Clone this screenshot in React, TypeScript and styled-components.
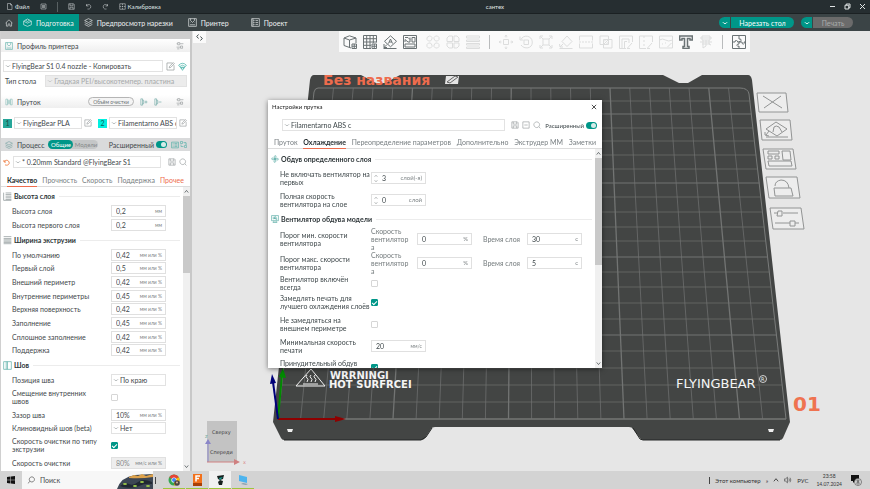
import React, { useId, useState } from 'react';
import styled, { createGlobalStyle, css } from 'styled-components';

const teal = '#009688';
const orange = '#ee6c4d';

const GlobalStyle = createGlobalStyle`
  * { box-sizing: border-box; }
  body { margin: 0; background: #e6e6e6; }
  body, button, input, select { font-family: Lato, "Noto Sans", sans-serif; font-size: 7px; color: #3f484b; }
  button, input, select { margin: 0; padding: 0; border: 0; background: none; border-radius: 0; }
  button { cursor: pointer; }
`;

/* ---------- icons ---------- */

const icons: Record<string, React.ReactNode> = {
  file: <path d="M3 1h6l3 3v9H3zM9 1v3h3" />,
  menu: <path d="M2 2h10v10H2zM4 5h6M4 7h6M4 9h6" />,
  save: <path d="M1.500 1.500h9.500l1.500 1.500v9.500H1.500zM4 1.500v4h6v-4M4 12.500V8.500h6v4" />,
  undo: <path d="M3 2v4h4M3 5.500C5 2 11 2 11.500 7S7 12.500 5 12" />,
  redo: <path d="M11 2v4H7M11 5.500C9 2 3 2 2.500 7S7 12.500 9 12" />,
  calib: <path d="M1.500 1.500h11v11h-11zM7 1.500v3M7 9.500v3M1.500 7h3M9.500 7h3M7 6v2M6 7h2" />,
  home: <path d="M1 7l6-5.500L13 7M2.500 6v6.500h3V9q1.500-2 3 0v3.500h3V6" />,
  box: <path d="M1 5l6-3.500L13 5v5.500L7 13l-6-2.500zM1 5l6 3 6-3M4 3.500L7 5.500l3-2" />,
  layers: <path d="M1 4l6-3 6 3-6 3zM1 7l6 3 6-3M1 10l6 3 6-3" />,
  printer: <path d="M1 1h12v12H1zM4 1v3l3 3 3-3V1M3 10.500h8M4 7h.5M9.500 7h.5" />,
  project: <path d="M1 1h12v12H1zM3.500 4h2M7 4h4M3.500 7h2M7 7h4M3.500 10h2M7 10h4M3 1v12" />,
  tune: <path d="M1 3h2M7 3h6M3 1h3.500v4H3zM1 9h7M8 7h3.500v4H8zM2 12h4" />,
  edit: <path d="M10 1.500H1.500v11h11V5M5 9l.7-2.500L11.500 1l1.500 1.500L7.500 8.300z" />,
  wifi: <path d="M1 5q6-6 12 0M3 7q4-4 8 0M5 9q2-2 4 0M4.500 9L7 13l2.500-4zM1 5l4 5M13 5l-4 5" />,
  spool: <path d="M1.500 2h3v10h-3zM9.500 2h3v10h-3zM4.500 4h5M4.500 6h5M4.500 8h5M4.500 10h5" />,
  spoolPlus: <path d="M1.500 1.500h3v11h-3zM4.500 4h2v6h-2M8 7h5M10.500 4.500v5" />,
  spoolMinus: <path d="M1.500 1.500h3v11h-3zM4.500 4h2v6h-2M8 7h5" />,
  search: <path d="M6.500 1.500a5 5 0 1 1-.01 0M10 10l3 3" />,
  find: <path d="M8.500 1.500a4.500 4.500 0 1 1-.01 0M5.500 9L1.500 13" />,
  minusBox: <path d="M1.500 1.500h11v11h-11zM4 7h6" />,
  reset: <path d="M2 2v4h4M2.500 5.500C4 2 10 1 12 6s-4 8-8 5.500" />,
  list: <path d="M1 2h12v10H1zM3 4.500h1.500M6 4.500h5M3 7h1.500M6 7h5M3 9.500h1.500M6 9.500h5" />,
  swap: <path d="M1 1h4v4H1zM9 9h4v4H9zM7 3h5v4M7 11H2V7M10 5l2 2 1.500-2" />,
  close: <path d="M2 2l10 10M12 2L2 12" />,
  min: <path d="M2 7h10" />,
  restore: <path d="M2 4.500h7.500V12H2zM4.500 4V2H12v7.500H9.500" />,
  chevron: <path d="M2 5q2.500 3.500 5 3.500T12 5" />,
  up: <path d="M2 10l5-6 5 6" />,
  down: <path d="M2 4l5 6 5-6" />,
  code: <path d="M5 1L1.500 5 5 9M9 5l3.500 4L9 13" />,
  addCube: <path d="M8 13L1 10.500V3L6.500.8 13 3v5M1 3l5.500 2L13 3M6.500 5v7.500M9 9h4.500v4.500H9zM11.250 9v4.500M9 11.250h4.500" />,
  addPlate: <path d="M8 13.500H.5V.5h13v7M.5 3.700h13M.5 7h13M.5 10.300H8M3.700.5v13M7 .5v13M10.300.5V8M9 9h4.500v4.500H9zM11.250 9v4.500M9 11.250h4.500" />,
  orient: <path d="M7.500.8l6 5.500-6 5.500-6-5.500zM5.500 8.500l2-4.500 2 4.500M6.200 7h2.600M.5 13.500h13M1 9v3.500h3M1 12.500l3-3" />,
  arrange: <path d="M.5.5h13v13H.5zM2 9h10v3H2zM9 2.500h3v4.500H9zM2 2.500h3l2 2M2 7V4.500l3 2.500h2V2.500" />,
  objects: <path d="M3.500 1h1L6 2.500V4L4.500 6h-2L1 4.500V2.500zM9.500 1h2L13 2.500v2L11.500 6h-2L8 4V2.500zM2.500 8h2L6 10v1.500L4.500 13h-2L1 11.500v-2zM9.500 8h2L13 9.500v2L11.500 13h-2L8 11.500V10z" />,
  parts: <path d="M3 1h3.500v5.500H1V3zM8 1h3l2 2v3.500H8zM1 8h5.500v5H3l-2-2zM8 8h5v3l-2 2H8z" />,
  layer: <path d="M.5 1h13v2H.5zM.5 5h13v1.500H.5zM.5 8.500h13V10H.5zM.5 12h13v1.500H.5z" />,
  move: <path d="M4.500 4.500h5v5h-5zM7 0v2.500M7 11.500V14M0 7h2.500M11.500 7H14M5.700 1.500L7 .3l1.300 1.200M5.700 12.500L7 13.700l1.300-1.200M1.500 5.700L.3 7l1.200 1.300M12.500 5.700L13.700 7l-1.200 1.300" />,
  rotate: <path d="M5 5h4.500v4.500H5zM2 4.500C4-.5 13 0 13.300 7S5 14.500 2 10M1 1.500v3.500h3.500" />,
  scale: <path d="M4 4h6v6H4zM1 4V1h3M10 1h3v3M13 10v3h-3M4 13H1v-3M1.500 1.500L4 4M12.500 1.500L10 4M12.500 12.500L10 10M1.500 12.500L4 10" />,
  lay: <path d="M8 1l5 5.500-5 5-5-5zM.5 13.500h13M.5 9l.5 3h3M1 12l3-3" />,
  cut: <path d="M.5 5.500V1h13v4.500M.5 8.500V13h13V8.500M0 7h2M3 7h2M6 7h2M9 7h2M12 7h2" />,
  bool: <path d="M1 1h8.500v8.500H1zM4.500 4.500H13V13H4.500zM5 6.500l2-2M5 9l4-4M7 9.500L9.500 7" />,
  support: <path d="M7 13.500H.5V1h13v6M3 13V4h7v4M5.500 13V6.500H8M8.500 13l4.500-5M8 13.500h3" />,
  seam: <path d="M7 13.500H.5V1h13v6M5 1v2M5 5v2M5 9v2M8.500 13l4.500-5M8 13.500h3" />,
  paint: <path d="M.5 1h13v12H.5zM.5 5q3-2 6 0t7 0M3 9h1M6 8h1M8.500 12l4-4" />,
  text: <path d="M.7 1h12.600v4h-2.300V3.500H8.500v8h1.500v2H4v-2h1.500v-8H3V5H.7z" />,
  measure: <path d="M1 3h12M3 1h8v4H3zM1 7h12M4 5v8l3-2V5M10 5v4l2 1M3 9h8" />,
  assembly: <path d="M.5.5h13v13H.5zM7 .5V4q2.500-.5 2 1.500T7 6.500V9q-2.500 0-2 1.500t2 .5v2.500M.5 7H3q0-2 1.500-1.500T5.500 7H10q0 2.500 1.500 2T12 7h1.500" />,
  fan: <path d="M7 7Q4 0 8.500 1.500 10 3 7 7q7-3 5.500 1.500Q11 10 7 7q3 7-1.500 5.500Q4 11 7 7q-7 3-5.500-1.500Q3 4 7 7" />,
  fanBox: <path d="M1 1h12v9H1zM3 13h8M7 6Q5 2 8 2.500T7 6q4-1 3.500 1.500T7 6q-4 2-3.500-1T7 6M5 10v3M9 10v3" />,
  bars: <path d="M4 1.500h9M4 4h9M4 6.500h9M4 9h9M4 11.500h9M1 1v12M1 13h12" />,
  width: <path d="M1 1h12M1 4h12M1 6h12M1 8h12M1 10h12M1 12h12" />,
  seamIcon: <path d="M1 1h12v12H1zM5 1v12M7 1v12" />,
  sound: <path d="M1 5h2l3-3v10L3 9H1zM8.500 4.500q2 2.500 0 5M10.500 3q3 4 0 8" />,
};

const IconSvg = styled.svg<{ $size: number; $color?: string; $weight?: number }>`
  width: ${p => p.$size}px;
  height: ${p => p.$size}px;
  flex: none;
  display: block;
  fill: none;
  stroke: ${p => p.$color ?? 'currentColor'};
  stroke-width: ${p => p.$weight ?? 1};
`;

function Icon({ name, size = 9, color, weight }: { name: string; size?: number; color?: string; weight?: number }) {
  return (
    <IconSvg viewBox="0 0 14 14" $size={size} $color={color} $weight={weight} aria-hidden="true">
      {icons[name]}
    </IconSvg>
  );
}

/* ---------- shell ---------- */

const Shell = styled.div`
  height: 100vh;
  display: flex;
  flex-direction: column;
  overflow: hidden;
`;

const TitleBar = styled.header`
  height: 14px;
  flex: none;
  display: flex;
  align-items: center;
  gap: 10px;
  padding: 0 4px 0 6px;
  background: #262e31;
  border-bottom: 1px solid #1b2123;
  color: #e2e6e7;
`;

const BarButton = styled.button`
  display: flex;
  align-items: center;
  gap: 2px;
  color: #dfe3e4;
  font-size: 6px;
`;

const BarDivider = styled.span`
  width: 1px;
  height: 10px;
  background: #596163;
`;

const DocTitle = styled.h1`
  flex: 1;
  margin: 0;
  text-align: center;
  font-size: 6px;
  font-weight: 400;
`;

const WindowButtons = styled.div`
  display: flex;
  gap: 8px;
`;

const NavBar = styled.nav`
  height: 17px;
  flex: none;
  display: flex;
  align-items: stretch;
  background: #3b4446;
  padding-right: 17px;
`;

const NavTab = styled.button<{ $active?: boolean; $gap?: number }>`
  display: flex;
  align-items: center;
  gap: 4px;
  padding: 0 5px;
  margin-right: ${p => p.$gap ?? 0}px;
  color: #eef1f1;
  white-space: nowrap;
  background: ${p => (p.$active ? teal : 'transparent')};
`;

const Actions = styled.div`
  margin-left: auto;
  display: flex;
  align-items: center;
  gap: 7px;
`;

const Split = styled.div<{ $muted?: boolean }>`
  display: flex;
  height: 11px;
  border-radius: 6px;
  overflow: hidden;
  gap: 1px;

  button {
    display: flex;
    align-items: center;
    justify-content: center;
    background: ${teal};
    color: #fff;
  }
  button:first-child { width: 11px; }
  button:last-child {
    width: ${p => (p.$muted ? 40 : 63)}px;
    ${p => p.$muted && css`background: #6b6b6b; color: #a9adad;`}
  }
`;

const Main = styled.main`
  flex: 1;
  min-height: 0;
  display: flex;
`;

/* ---------- side panel ---------- */

const Side = styled.aside`
  width: 192px;
  flex: none;
  display: flex;
  flex-direction: column;
  background: #fff;
  border-left: 1px solid #d0d0d0;
  border-right: 2px solid #c8c8c8;
`;

const SideTop = styled.div`
  height: 8px;
  flex: none;
  background: #cecece;
`;

const PanelHead = styled.div<{ $dark?: boolean }>`
  height: 13px;
  flex: none;
  display: flex;
  align-items: center;
  gap: 4px;
  padding: 0 ${p => (p.$dark ? 3 : 6)}px 0 4px;
  background: ${p => (p.$dark ? '#d9dadb' : 'linear-gradient(#fff, #efefef)')};
`;

const PanelTitle = styled.h2`
  margin: 0;
  font-size: 7px;
  font-weight: 400;
  white-space: nowrap;
`;

const Spacer = styled.span`
  flex: 1;
`;

const Line = styled.div<{ $top?: number; $bottom?: number; $gap?: number }>`
  flex: none;
  display: flex;
  align-items: center;
  gap: ${p => p.$gap ?? 4}px;
  padding: ${p => p.$top ?? 0}px 3px ${p => p.$bottom ?? 0}px 2px;
`;

const LineLabel = styled.label`
  padding-left: 2px;
`;

const HeadTools = styled.div`
  display: flex;
  gap: 6px;
  padding: 0 10px 0 2px;
`;

const IconPair = styled.div`
  display: flex;
  align-items: center;
  gap: 1px;
`;

const SelectBox = styled.span<{ $off?: boolean; $width?: number }>`
  ${p => (p.$width ? css`width: ${p.$width}px; flex: none;` : css`flex: 1;`)}
  min-width: 0;
  height: 12px;
  display: flex;
  align-items: center;
  gap: 1px;
  padding-left: 1px;
  border: 1px solid #e2e2e2;
  background: ${p => (p.$off ? '#ececec' : '#fff')};
  color: ${p => (p.$off ? '#a5a8a9' : '#6b7375')};

  select {
    appearance: none;
    flex: 1;
    min-width: 0;
    height: 10px;
    outline: none;
    opacity: 1;
    color: ${p => (p.$off ? '#a5a8a9' : '#3f484b')};
    text-overflow: clip;
  }
`;

function Select({ value, label, off, width, id }: { value: string; label?: string; off?: boolean; width?: number; id?: string }) {
  return (
    <SelectBox $off={off} $width={width}>
      <Icon name="chevron" size={6} />
      <select id={id} aria-label={label} disabled={off} defaultValue={value}>
        <option>{value}</option>
      </select>
    </SelectBox>
  );
}

const IconButton = styled.button<{ $color?: string }>`
  flex: none;
  display: flex;
  color: ${p => p.$color ?? '#8b9192'};
`;

const Chip = styled.button`
  height: 9px;
  padding: 0 4px;
  border: 1px solid #b5b5b5;
  border-radius: 5px;
  background: #f4f4f4;
  font-size: 5px;
  line-height: 6px;
  color: #6b7375;
`;

const Swatch = styled.span<{ $color: string; $ink: string }>`
  width: 9px;
  height: 9px;
  flex: none;
  line-height: 9px;
  text-align: center;
  background: ${p => p.$color};
  color: ${p => p.$ink};
`;

const Pills = styled.div`
  display: flex;
  height: 9px;
  border-radius: 5px;
  background: #c4c6c7;
`;

const Pill = styled.button<{ $on?: boolean }>`
  width: 25px;
  border-radius: 5px;
  font-size: 6px;
  line-height: 8px;
  background: ${p => (p.$on ? teal : 'transparent')};
  color: ${p => (p.$on ? '#fff' : '#85898a')};
`;

const Toggle = styled.input`
  appearance: none;
  width: 11px;
  height: 7px;
  margin: 0;
  flex: none;
  border-radius: 4px;
  background: #c4c6c7;
  display: flex;
  align-items: center;

  &::after {
    content: '';
    width: 5px;
    height: 5px;
    border-radius: 3px;
    margin: 0 1px;
    background: #fff;
  }
  &:checked { background: ${teal}; justify-content: flex-end; }
  &:checked::after { background: #d5ebe9; }
`;

const ToggleLabel = styled.label<{ $small?: boolean }>`
  display: flex;
  align-items: center;
  gap: 2px;
  white-space: nowrap;
  font-size: ${p => (p.$small ? 6 : 7)}px;
`;

const Tabs = styled.div<{ $pad: number }>`
  flex: none;
  display: flex;
  justify-content: space-between;
  padding: 0 ${p => p.$pad}px;
  border-bottom: 1px solid #dcdcdc;
`;

const Tab = styled.button<{ $active?: boolean; $accent?: boolean }>`
  height: 13px;
  border-bottom: 1px solid ${p => (p.$active ? orange : 'transparent')};
  margin-bottom: -1px;
  white-space: nowrap;
  font-weight: ${p => (p.$active ? 700 : 400)};
  color: ${p => (p.$accent ? orange : p.$active ? '#262e31' : '#777e81')};
`;

/* ---------- option lists ---------- */

const Scroller = styled.div`
  flex: 1;
  min-height: 0;
  display: flex;
`;

const Options = styled.div<{ $left: number; $top: number }>`
  flex: 1;
  min-width: 0;
  overflow: hidden;
  padding: ${p => p.$top}px 3px 0 ${p => p.$left}px;
`;

const Track = styled.div`
  width: 7px;
  flex: none;
  display: flex;
  flex-direction: column;
  align-items: center;
  background: #f0f0f0;
  color: #4b4f50;
`;

const Arrow = styled.button`
  height: 9px;
  flex: none;
  display: flex;
  align-items: center;
`;

const Thumb = styled.span<{ $share: number }>`
  width: 7px;
  height: ${p => p.$share}%;
  background: #c9c9c9;
`;

const Fill = styled.span`
  flex: 1;
`;

function Scrollbar({ share }: { share: number }) {
  return (
    <Track>
      <Arrow aria-label="Вверх"><Icon name="up" size={5} weight={2} /></Arrow>
      <Thumb $share={share} />
      <Fill />
      <Arrow aria-label="Вниз"><Icon name="down" size={5} weight={2} /></Arrow>
    </Track>
  );
}

const GroupHead = styled.h3`
  height: 16px;
  margin: 0;
  display: flex;
  align-items: center;
  gap: 2px;
  font-size: 7px;
  font-weight: 700;
  white-space: nowrap;
  color: #2d3538;

  &::after {
    content: '';
    flex: 1;
    height: 1px;
    margin-left: 2px;
    background: #ececec;
  }
`;

const GroupBody = styled.div<{ $min?: number }>`
  display: grid;
  min-height: ${p => p.$min ?? 0}px;
`;

const OptionRow = styled.div<{ $label: number; $gap: number; $pad?: number }>`
  display: grid;
  grid-template-columns: ${p => p.$label}px 1fr;
  column-gap: ${p => p.$gap}px;
  align-items: center;
  min-height: 13px;
  padding: ${p => p.$pad ?? 0}px 0 ${p => p.$pad ?? 0}px 9px;
  line-height: 8px;

  > label { white-space: pre-line; }
`;

const FieldBox = styled.span<{ $off?: boolean }>`
  width: 55px;
  height: 12px;
  flex: none;
  display: flex;
  align-items: center;
  padding: 0 3px 0 4px;
  border: 1px solid #e0e0e0;
  background: ${p => (p.$off ? '#eee' : '#fff')};

  input {
    width: 100%;
    min-width: 0;
    height: 9px;
    outline: none;
    color: ${p => (p.$off ? '#85898a' : '#3f484b')};
  }
`;

const Unit = styled.span<{ $small?: boolean }>`
  flex: none;
  font-size: ${p => (p.$small ? 5 : 6)}px;
  color: #7f8587;
`;

const Spin = styled.span`
  display: flex;
  flex-direction: column;
  gap: 1px;
  margin: 0 4px 0 -2px;
  color: #8a8f90;
`;

function Field({ value, unit, id, off, spin }: { value: string; unit: string; id: string; off?: boolean; spin?: boolean }) {
  return (
    <FieldBox $off={off}>
      {spin && <Spin><Icon name="up" size={4} weight={2} /><Icon name="down" size={4} weight={2} /></Spin>}
      <input id={id} defaultValue={value} disabled={off} />
      <Unit $small={unit.startsWith('мм')}>{unit}</Unit>
    </FieldBox>
  );
}

const Check = styled.input`
  appearance: none;
  width: 7px;
  height: 7px;
  margin: 0;
  border: 1px solid #d6d6d6;
  border-radius: 1px;
  display: grid;
  place-items: center;
  background: #fff;

  &:checked { background: ${teal}; border-color: ${teal}; }
  &:checked::after {
    content: '';
    width: 4px;
    height: 2px;
    border-left: 1px solid #fff;
    border-bottom: 1px solid #fff;
    transform: rotate(-45deg);
  }
`;

const SubFields = styled.div`
  display: grid;
  grid-template-columns: 46px 66px 44px 55px;
  align-items: center;
  color: #747b7d;

  label { overflow-wrap: anywhere; padding-right: 7px; }
  label + span + label { padding-right: 0; }
`;

type Opt = {
  label: string;
  value?: string;
  unit?: string;
  select?: boolean;
  check?: boolean;
  off?: boolean;
  spin?: boolean;
  pad?: number;
  pair?: [string, string];
};

function Option({ o, width, gap }: { o: Opt; width: number; gap: number }) {
  const id = useId();
  return (
    <OptionRow $label={width} $gap={gap} $pad={o.pad}>
      <label htmlFor={id}>{o.label}</label>
      {o.pair ? (
        <SubFields>
          <label htmlFor={id}>Скорость вентилятора</label>
          <Field id={id} value={o.pair[0]} unit="%" />
          <label htmlFor={id + 't'}>Время слоя</label>
          <Field id={id + 't'} value={o.pair[1]} unit="с" />
        </SubFields>
      ) : o.check !== undefined ? (
        <Check type="checkbox" id={id} defaultChecked={o.check} />
      ) : o.select ? (
        <Select id={id} value={o.value!} width={55} />
      ) : (
        <Field id={id} value={o.value!} unit={o.unit!} off={o.off} spin={o.spin} />
      )}
    </OptionRow>
  );
}

const mm = 'мм или %';

const sideGroups: { title: string; icon: string; color: string; min?: number; rows: Opt[] }[] = [
  {
    title: 'Высота слоя', icon: 'bars', color: '#7d8889', min: 28,
    rows: [
      { label: 'Высота слоя', value: '0,2', unit: 'мм' },
      { label: 'Высота первого слоя', value: '0,2', unit: 'мм' },
    ],
  },
  {
    title: 'Ширина экструзии', icon: 'width', color: '#7d8889', min: 109,
    rows: [
      { label: 'По умолчанию', value: '0,42', unit: mm },
      { label: 'Первый слой', value: '0,5', unit: mm },
      { label: 'Внешний периметр', value: '0,42', unit: mm },
      { label: 'Внутренние периметры', value: '0,45', unit: mm },
      { label: 'Верхняя поверхность', value: '0,42', unit: mm },
      { label: 'Заполнение', value: '0,45', unit: mm },
      { label: 'Сплошное заполнение', value: '0,42', unit: mm },
      { label: 'Поддержка', value: '0,42', unit: mm },
    ],
  },
  {
    title: 'Шов', icon: 'seamIcon', color: '#4fa9a1',
    rows: [
      { label: 'Позиция шва', value: 'По краю', select: true },
      { label: 'Смещение внутренних швов', check: false, pad: 3 },
      { label: 'Зазор шва', value: '10%', unit: mm },
      { label: 'Клиновидный шов (beta)', value: 'Нет', select: true },
      { label: 'Скорость очистки по типу экструзии', check: true, pad: 3 },
      { label: 'Скорость очистки', value: '80%', unit: 'мм/с или %', off: true },
    ],
  },
];

function SidePanel() {
  return (
    <Side>
      <SideTop />
      <PanelHead>
        <Icon name="printer" size={8} color="#4fa9a1" />
        <PanelTitle>Профиль принтера</PanelTitle>
        <Spacer />
        <IconButton aria-label="Параметры принтера"><Icon name="tune" size={8} /></IconButton>
      </PanelHead>
      <Line $top={8} $bottom={3} $gap={3}>
        <Select label="Принтер" value="FlyingBear S1 0.4 nozzle - Копировать" />
        <IconButton aria-label="Изменить"><Icon name="edit" size={9} /></IconButton>
        <IconButton aria-label="Подключение" $color="#2fa89c"><Icon name="wifi" size={9} /></IconButton>
      </Line>
      <Line $gap={9} $bottom={8}>
        <LineLabel htmlFor="bed-type">Тип стола</LineLabel>
        <Select id="bed-type" off value="Гладкая PEI/высокотемпер. пластина" />
      </Line>
      <PanelHead>
        <Icon name="spool" size={8} color="#7fb9b4" />
        <PanelTitle>Пруток</PanelTitle>
        <Spacer />
        <Chip>Объём очистки</Chip>
        <HeadTools>
          <IconButton aria-label="Добавить" $color="#5f9f9a"><Icon name="spoolPlus" size={8} /></IconButton>
          <IconButton aria-label="Удалить" $color="#5f9f9a"><Icon name="spoolMinus" size={8} /></IconButton>
        </HeadTools>
        <IconButton aria-label="Параметры прутка"><Icon name="tune" size={8} /></IconButton>
      </PanelHead>
      <Line $top={9} $bottom={9} $gap={2}>
        <Swatch $color="#26a699" $ink="#1d4b47">1</Swatch>
        <Select label="Пруток 1" width={68} value="FlyingBear PLA" />
        <IconButton aria-label="Изменить"><Icon name="edit" size={8} /></IconButton>
        <Spacer />
        <Swatch $color="#00f0e0" $ink="#0c5f5a">2</Swatch>
        <Select label="Пруток 2" width={68} value="Filamentarno ABS c" />
        <IconButton aria-label="Изменить"><Icon name="edit" size={8} /></IconButton>
      </Line>
      <PanelHead $dark>
        <Icon name="layers" size={8} color="#6f9f9c" />
        <PanelTitle>Процесс</PanelTitle>
        <Pills>
          <Pill $on>Общие</Pill>
          <Pill>Модели</Pill>
        </Pills>
        <Spacer />
        <ToggleLabel>
          Расширенный
          <Toggle type="checkbox" defaultChecked />
        </ToggleLabel>
        <IconPair>
          <IconButton aria-label="Список" $color="#3ba79d"><Icon name="list" size={8} /></IconButton>
          <IconButton aria-label="Сравнить" $color="#3ba79d"><Icon name="swap" size={7} /></IconButton>
        </IconPair>
      </PanelHead>
      <Line $top={5} $bottom={6} $gap={3}>
        <IconButton aria-label="Сбросить" $color="#f0864f"><Icon name="reset" size={7} weight={2} /></IconButton>
        <Select label="Профиль процесса" width={148} value="* 0.20mm Standard @FlyingBear S1" />
        <Spacer />
        <IconButton aria-label="Сохранить"><Icon name="save" size={8} /></IconButton>
        <IconButton aria-label="Найти"><Icon name="search" size={8} /></IconButton>
      </Line>
      <Tabs $pad={6} role="tablist">
        <Tab role="tab" $active>Качество</Tab>
        <Tab role="tab">Прочность</Tab>
        <Tab role="tab">Скорость</Tab>
        <Tab role="tab">Поддержка</Tab>
        <Tab role="tab" $accent>Прочее</Tab>
      </Tabs>
      <Scroller>
        <Options $left={2} $top={1}>
          {sideGroups.map(g => (
            <section key={g.title}>
              <GroupHead><Icon name={g.icon} size={9} color={g.color} />{g.title}</GroupHead>
              <GroupBody $min={g.min}>
                {g.rows.map(r => <Option key={r.label} o={r} width={88} gap={11} />)}
              </GroupBody>
            </section>
          ))}
        </Options>
        <Scrollbar share={27} />
      </Scroller>
    </Side>
  );
}

/* ---------- 3D view ---------- */

const View = styled.section`
  position: relative;
  flex: 1;
  min-width: 0;
  overflow: hidden;
  background: #e6e6e6;
`;

const Scene = styled.svg`
  display: block;
  width: 100%;
  height: 100%;
`;

const CollapseButton = styled.button`
  position: absolute;
  top: 0;
  left: 1px;
  width: 13px;
  height: 12px;
  display: grid;
  place-items: center;
  background: #fafafa;
`;

const ToolStrip = styled.div`
  position: absolute;
  top: 0;
  left: 147px;
  height: 21px;
  display: flex;
  align-items: center;
  gap: 9px;
  padding: 0 4px;
  background: #fafafa;
`;

const ToolGroup = styled.div`
  display: flex;
  gap: 6px;
`;

const ToolDivider = styled.span`
  width: 1px;
  height: 14px;
  background: #b9bbbc;
`;

const Tool = styled.button<{ $on?: boolean }>`
  display: flex;
  color: ${p => (p.$on ? '#6a7274' : '#dcdddd')};
`;

const rowYs = [88, 101, 114, 128, 141, 155, 169, 183, 197, 212, 227, 241, 257, 272, 287, 303, 319, 335, 351, 368, 385, 402, 419];
const columns = Array.from({ length: 21 }, (_, i) => i - 14);
const leftEdge = (y: number) => 314 - ((y - 88) * 36) / 331;
const rightEdge = (y: number) => 749 + ((y - 88) * 37) / 331;

function Bed() {
  return (
    <g>
      <path
        d="M314 75H361L376 83H385L400 75H663L679 83H688L702 75H748Q751 75 752 80L790 422L783 438Q782 440 780 440H643Q641 440 640 438L633 429Q632 427 629 427H435Q432 427 431 429L425 438Q424 440 421 440H284Q282 440 281 438L273 422L310 80Q311 75 314 75Z"
        fill="#434544"
      />
      <path d="M284 440H421L426 437 432 428M633 428L640 439 643 440H780" fill="none" stroke="#252726" />
      <path d="M287 429h6l-1 3h-4zM768 429h6l-1 3h-4z" fill="#eee" />
      <path d={`M${leftEdge(419)} 419L314 92Q315 88 318 88H740Q748 88 749 94L786 419Z`} fill="none" stroke="#7a7c7b" />
      <g stroke="#727473">
        {rowYs.slice(1).map((y, i) => (
          <line key={y} x1={leftEdge(y)} x2={rightEdge(y)} y1={y} y2={y} strokeOpacity={i % 5 === 1 ? 1 : 0.65} />
        ))}
        {columns.map(k => (
          <line key={k} x1={610 + k * 19.75} x2={624 + k * 23.1} y1={88} y2={419} strokeOpacity={k % 5 === 0 ? 1 : 0.7} strokeWidth={k % 5 === 0 ? 1.3 : 1} />
        ))}
      </g>
    </g>
  );
}

function SideControls() {
  return (
    <g fill="#ededed" stroke="#929494" strokeLinejoin="round">
      <path d="M757 93h29l2 19h-29zM760 120h30l2 20h-30zM763 149h30l3 20h-30zM766 177h31l3 21h-31zM770 208h31l3 21h-31z" />
      <g fill="none">
        <path d="M763 96l19 12M781 96l-17 12" />
        <path d="M776 122l11 7-10 7-11-7zM773 132l1-5q2-2 5 0l3 5M766 137h22M769 131l-3 4M765 132v3l4 1" />
        <path d="M768 151h11v3h-11zM782 151h8l1 9h-8zM768 156h4v3h-4zM775 156h4v3h-4zM768 161h23l1 5h-23z" />
        <path d="M774 188h17l2 8h-18zM775 186q0-5 6-6 7 0 8 8" />
        <path d="M774 213h4M783 213h15M778 211h4v5h-5zM775 223h15M795 223h4M790 221h5v5h-5z" />
      </g>
    </g>
  );
}

const SceneText = styled.text<{ $size: number; $color: string; $bold?: boolean }>`
  font-family: "DejaVu Sans", sans-serif;
  font-size: ${p => p.$size}px;
  font-weight: ${p => (p.$bold ? 700 : 400)};
  fill: ${p => p.$color};
`;

function Viewport() {
  const groups = [
    ['addCube', 'addPlate', 'orient', 'arrange'],
    ['objects', 'parts', 'layer'],
    ['move', 'rotate', 'scale', 'lay', 'cut', 'bool', 'support', 'seam', 'paint', 'text', 'measure'],
    ['assembly'],
  ];
  const enabled = new Set(['addCube', 'addPlate', 'orient', 'arrange', 'text', 'assembly']);
  return (
    <View>
      <Scene viewBox="192 31 678 440" preserveAspectRatio="xMidYMid slice" role="img" aria-label="Стол принтера">
        <Bed />
        <SceneText $size={14} $color={orange} $bold x="323" y="85">Без названия</SceneText>
        <path d="M446 76h13l-1 8h-13z" fill="#e4e4e4" />
        <path d="M447 82l8-6 3 1-8 6z" fill="none" stroke="#666" />
        <g fill="none" stroke="#f2f2f2" strokeLinejoin="round">
          <path d="M311 369l14 17h-29zM303 384h15" />
          <path d="M307 375q-2 2 0 3t0 4M311 375q-2 2 0 3t0 4M315 375q-2 2 0 3t0 4" />
        </g>
        <SceneText $size={10} $color="#f5f5f5" $bold x="330" y="379">WRRNINGI</SceneText>
        <SceneText $size={10} $color="#f5f5f5" $bold x="329" y="388">HOT SURFRCEI</SceneText>
        <SceneText $size={13} $color="#f5f5f5" x="676" y="388">FLYINGBEAR</SceneText>
        <circle cx="763" cy="379" r="3.500" fill="none" stroke="#f5f5f5" strokeWidth=".8" />
        <SceneText $size={5} $color="#f5f5f5" x="761" y="381">R</SceneText>
        <SceneText $size={20} $color="#ef7350" $bold x="793" y="411">01</SceneText>
        <SideControls />
        <g strokeWidth="2" fill="none">
          <path d="M278 419H336" stroke="#8e0000" />
          <path d="M278 419L282 375" stroke="#008a00" />
          <path d="M278 419L273 382" stroke="#00007a" />
        </g>
        <path d="M335 416l11 3-11 3z" fill="#8e0000" />
        <path d="M279 377l4-9 3 10z" fill="#008a00" />
        <path d="M270 384l2-10 4 9z" fill="#00007a" />
        <path d="M207 421h30v41h-30z" fill="#c3c3c3" />
        <SceneText $size={5} $color="#3b3b3b" x="212" y="434">Сверху</SceneText>
        <SceneText $size={5} $color="#3b3b3b" x="210" y="454">Спереди</SceneText>
        <path d="M208 462V443" stroke="#8a86c8" />
        <path d="M205 444l3-5 3 5z" fill="#8a86c8" />
        <path d="M207 462h27" stroke="#cf8080" />
        <path d="M234 459l6 3-6 3z" fill="#cf8080" />
        <SceneText $size={5} $color="#d98a8a" x="243" y="464">x</SceneText>
        <SceneText $size={5} $color="#69a99c" x="205" y="438">z</SceneText>
      </Scene>
      <CollapseButton aria-label="Свернуть панель"><Icon name="code" size={7} weight={2} /></CollapseButton>
      <ToolStrip>
        {groups.map((g, i) => (
          <React.Fragment key={i}>
            {i > 1 && <ToolDivider />}
            <ToolGroup>
              {g.map(n => (
                <Tool key={n} $on={enabled.has(n)} aria-label={n}>
                  <Icon name={n} size={14} weight={n === 'text' ? 1.5 : 1} />
                </Tool>
              ))}
            </ToolGroup>
          </React.Fragment>
        ))}
      </ToolStrip>
    </View>
  );
}

/* ---------- filament dialog ---------- */

const Overlay = styled.div`
  position: fixed;
  inset: 0;
  display: flex;
  justify-content: center;
  align-items: flex-start;
  padding-top: 100px;
  pointer-events: none;
`;

const Dialog = styled.div`
  width: 334px;
  max-height: 268px;
  display: flex;
  flex-direction: column;
  background: #fff;
  box-shadow: 0 1px 5px rgba(0, 0, 0, 0.5);
  pointer-events: auto;
`;

const DialogTitle = styled.div`
  height: 13px;
  flex: none;
  display: flex;
  align-items: center;
  justify-content: space-between;
  padding: 0 5px 0 4px;

  h2 { margin: 0; font-size: 6px; font-weight: 400; color: #222; }
`;

const DialogBar = styled.div`
  flex: none;
  display: flex;
  align-items: center;
  gap: 4px;
  padding: 6px 5px 5px 14px;
`;

const DialogTools = styled.div`
  display: flex;
  gap: 3px;
  padding-left: 2px;
`;

const dialogGroups: { title: string; icon: string; rows: Opt[] }[] = [
  {
    title: 'Обдув определенного слоя', icon: 'fan',
    rows: [
      { label: 'Не включать вентилятор на первых', value: '3', unit: 'слой(-я)', spin: true, pad: 3 },
      { label: 'Полная скорость вентилятора на слое', value: '0', unit: 'слой', spin: true, pad: 3 },
    ],
  },
  {
    title: 'Вентилятор обдува модели', icon: 'fanBox',
    rows: [
      { label: 'Порог мин. скорости вентилятора', pair: ['0', '30'] },
      { label: 'Порог макс. скорости вентилятора', pair: ['0', '5'] },
      { label: 'Вентилятор включён\nвсегда', check: false, pad: 0 },
      { label: 'Замедлять печать для лучшего охлаждения слоёв', check: true, pad: 3 },
      { label: 'Не замедляться на внешнем периметре', check: false, pad: 3 },
      { label: 'Минимальная скорость печати', value: '20', unit: 'мм/с', pad: 3 },
      { label: 'Принудительный обдув навесов и мостов', check: true, pad: 2 },
    ],
  },
];

function FilamentDialog({ onClose }: { onClose: () => void }) {
  const tabs = ['Пруток', 'Охлаждение', 'Переопределение параметров', 'Дополнительно', 'Экструдер ММ', 'Заметки'];
  return (
    <Overlay>
      <Dialog role="dialog" aria-labelledby="dialog-title">
        <DialogTitle>
          <h2 id="dialog-title">Настройки прутка</h2>
          <IconButton aria-label="Закрыть" $color="#333" onClick={onClose}><Icon name="close" size={6} weight={2} /></IconButton>
        </DialogTitle>
        <DialogBar>
          <Select label="Профиль прутка" value="Filamentarno ABS c" />
          <DialogTools>
            <IconButton aria-label="Сохранить"><Icon name="save" size={8} /></IconButton>
            <IconButton aria-label="Удалить"><Icon name="minusBox" size={8} /></IconButton>
            <IconButton aria-label="Найти"><Icon name="search" size={8} /></IconButton>
          </DialogTools>
          <ToggleLabel $small>
            Расширенный
            <Toggle type="checkbox" defaultChecked />
          </ToggleLabel>
        </DialogBar>
        <Tabs $pad={6} role="tablist">
          {tabs.map(t => <Tab key={t} role="tab" $active={t === 'Охлаждение'}>{t}</Tab>)}
        </Tabs>
        <Scroller>
          <Options $left={3} $top={2}>
            {dialogGroups.map(g => (
              <section key={g.title}>
                <GroupHead><Icon name={g.icon} size={8} color="#3f9f97" />{g.title}</GroupHead>
                <GroupBody>
                  {g.rows.map(r => <Option key={r.label} o={r} width={91} gap={0} />)}
                </GroupBody>
              </section>
            ))}
          </Options>
          <Scrollbar share={49} />
        </Scroller>
      </Dialog>
    </Overlay>
  );
}

/* ---------- task bar ---------- */

const TaskBar = styled.footer`
  height: 18px;
  flex: none;
  display: flex;
  align-items: stretch;
  background: #d3d3d3;
  color: #333;
`;

const StartButton = styled.button`
  width: 22px;
  display: grid;
  place-items: center;
`;

const SearchBox = styled.label`
  width: 131px;
  display: flex;
  align-items: center;
  gap: 5px;
  padding-left: 5px;
  background: #f7f7f7;

  input { flex: 1; min-width: 0; outline: none; }
  input::placeholder { color: #4a4a4a; opacity: 1; }
`;

const TaskHandle = styled.span<{ $after: number }>`
  width: 1px;
  height: 7px;
  align-self: center;
  margin: 0 ${p => p.$after}px 0 2px;
  background: #444;
`;

const Task = styled.button<{ $active?: boolean }>`
  width: 22px;
  display: grid;
  place-items: center;
  border-bottom: 1px solid #9dc43c;
  margin-right: 1px;
  background: ${p => (p.$active ? '#f1f1f1' : 'transparent')};
`;

const Tray = styled.div`
  margin-left: auto;
  display: flex;
  align-items: center;
  gap: 5px;
  padding-right: 8px;
  font-size: 6px;
  white-space: nowrap;
`;

const Clock = styled.time`
  text-align: center;
  font-size: 5px;
  line-height: 8px;
  margin: 0 3px;
`;

const Art = styled.svg<{ $w: number; $h: number }>`
  width: ${p => p.$w}px;
  height: ${p => p.$h}px;
  display: block;
  flex: none;
`;

function Taskbar() {
  return (
    <TaskBar>
      <StartButton aria-label="Пуск">
        <Art $w={8} $h={8} viewBox="0 0 8 8"><path d="M0 1l3.500-.5v3.200H0zM4 .4L8 0v3.700H4zM0 4.200h3.500v3.300L0 7zM4 4.200h4V8l-4-.5z" fill="#111" /></Art>
      </StartButton>
      <SearchBox>
        <Icon name="find" size={8} />
        <input placeholder="Поиск" aria-label="Поиск" />
        <Art $w={36} $h={18} viewBox="0 0 36 18">
          <path d="M0 18Q4 6 18 4L36 3V18z" fill="#3c4654" />
          <path d="M12 6l5-2 4 1 4-2 4 2 7-2v3q-12 2-24 1z" fill="#dda24c" />
          <path d="M3 15q5-4 9-2t9-2 14 0v2q-7-1-13 2T6 16z" fill="#202832" />
          <g fill="#9cc84a"><ellipse cx="8" cy="13" rx="2" ry="1" /><ellipse cx="18" cy="15" rx="2" ry="1" /><ellipse cx="25" cy="11" rx="2" ry="1" /><ellipse cx="31" cy="15" rx="2" ry="1" /></g>
        </Art>
      </SearchBox>
      <TaskHandle $after={7} />
      <Task aria-label="Chrome">
        <Art $w={12} $h={12} viewBox="0 0 12 12">
          <circle cx="6" cy="6" r="5.500" fill="#33a852" />
          <path d="M6 6L1.200 3.200A5.500 5.500 0 0 1 10.800 3.300z" fill="#e94335" />
          <path d="M6 6l4.800-2.700A5.500 5.500 0 0 1 6 11.500z" fill="#fbbc05" />
          <circle cx="6" cy="6" r="2.600" fill="#fff" /><circle cx="6" cy="6" r="2" fill="#4285f4" />
          <circle cx="9" cy="9" r="2.800" fill="#4c4540" /><circle cx="9" cy="8.500" r="1" fill="#d9b79b" />
        </Art>
      </Task>
      <Task aria-label="Fusion">
        <Art $w={11} $h={12} viewBox="0 0 11 12">
          <path d="M1 0h9v12H1z" fill="#f2711c" /><path d="M1 9h9v3H1z" fill="#a83f07" />
          <path d="M4 7.500V2h4M4 4.500h3" stroke="#fff" strokeWidth="1.500" fill="none" />
        </Art>
      </Task>
      <Task $active aria-label="Slicer">
        <Art $w={9} $h={12} viewBox="0 0 9 12">
          <path d="M1 2l7-1-1 4-3 1 3 1-1 4H3L2 8l2-2-2-1z" fill="#17201f" /><path d="M3 4l4-1-3 3z" fill="#12a094" />
        </Art>
      </Task>
      <Task aria-label="Компьютер">
        <Art $w={11} $h={12} viewBox="0 0 11 12">
          <path d="M1 1l8 2v6L1 7z" fill="#4db4ee" /><path d="M5 9l5 1-2 1-5-1z" fill="#8ba0ae" />
        </Art>
      </Task>
      <Tray>
        <TaskHandle $after={0} />
        <span>Этот компьютер</span>
        <span>»</span>
        <Icon name="up" size={6} weight={2} />
        <Icon name="sound" size={8} />
        <span>РУС</span>
        <Clock>23:58<br />14.07.2024</Clock>
        <Art $w={12} $h={12} viewBox="0 0 12 12">
          <path d="M1 1h8v6H5L3 9V7H1z" fill="#111" />
          <circle cx="8" cy="8" r="3.500" fill="#ddd" stroke="#555" strokeWidth=".7" />
          <path d="M8 6a1 1 0 1 1-.01 0M8 8a1.100 1.100 0 1 1-.01 0" fill="none" stroke="#222" strokeWidth=".6" />
        </Art>
      </Tray>
    </TaskBar>
  );
}

export default function App() {
  const [open, setOpen] = useState(true);
  return (
    <Shell>
      <GlobalStyle />
      <TitleBar>
        <BarButton><Icon name="file" size={7} />Файл</BarButton>
        <BarButton aria-label="Меню"><Icon name="menu" size={7} /></BarButton>
        <BarDivider />
        <BarButton aria-label="Сохранить"><Icon name="save" size={7} /></BarButton>
        <BarButton aria-label="Отменить"><Icon name="undo" size={7} /></BarButton>
        <BarButton aria-label="Повторить"><Icon name="redo" size={7} /></BarButton>
        <BarButton><Icon name="calib" size={7} />Калибровка</BarButton>
        <DocTitle>сантех</DocTitle>
        <WindowButtons>
          <BarButton aria-label="Свернуть"><Icon name="min" size={7} weight={2} /></BarButton>
          <BarButton aria-label="Восстановить"><Icon name="restore" size={7} weight={2} /></BarButton>
          <BarButton aria-label="Закрыть"><Icon name="close" size={7} weight={2} /></BarButton>
        </WindowButtons>
      </TitleBar>
      <NavBar>
        <NavTab aria-label="Домой"><Icon name="home" size={8} /></NavTab>
        <NavTab $active><Icon name="box" size={9} />Подготовка</NavTab>
        <NavTab $gap={5}><Icon name="layers" size={9} />Предпросмотр нарезки</NavTab>
        <NavTab $gap={12}><Icon name="printer" size={9} />Принтер</NavTab>
        <NavTab><Icon name="project" size={9} />Проект</NavTab>
        <Actions>
          <Split>
            <button aria-label="Параметры нарезки"><Icon name="chevron" size={6} weight={2} /></button>
            <button>Нарезать стол</button>
          </Split>
          <Split $muted>
            <button aria-label="Параметры печати"><Icon name="chevron" size={6} weight={2} /></button>
            <button>Печать</button>
          </Split>
        </Actions>
      </NavBar>
      <Main>
        <SidePanel />
        <Viewport />
      </Main>
      <Taskbar />
      {open && <FilamentDialog onClose={() => setOpen(false)} />}
    </Shell>
  );
}
